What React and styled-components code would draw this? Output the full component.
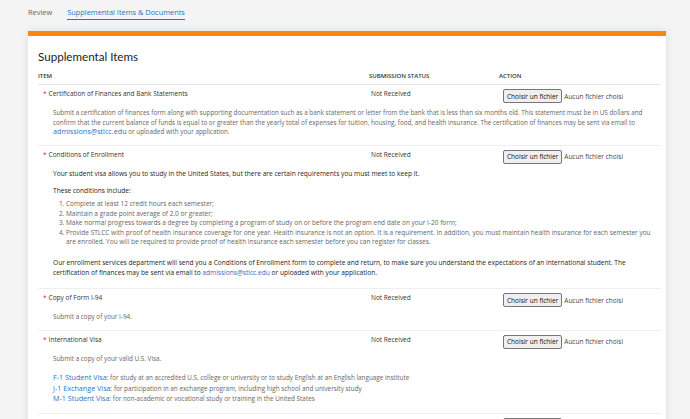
import React from "react";
import styled, { createGlobalStyle } from "styled-components";

const Global = createGlobalStyle`
  html, body { margin: 0; padding: 0; background: #f4f4f4; }
  body { font-family: "Open Sans", "Liberation Sans", sans-serif; color: #333; }
`;

const Page = styled.div`
  padding: 7px 24px 0 28px;
`;

const Tabs = styled.nav`
  display: flex;
  gap: 15px;
  align-items: flex-end;
  height: 13px;
  margin-bottom: 11px;
`;

const Tab = styled.a`
  font-size: 7.4px;
  line-height: 11px;
  color: ${(p) => (p.$active ? "#2d72c4" : "#666")};
  text-decoration: none;
  border-bottom: 1px solid ${(p) => (p.$active ? "#2d72c4" : "transparent")};
  padding-bottom: 1px;
  cursor: pointer;
`;

const Card = styled.section`
  background: #fff;
  border-top: 5px solid #f5890f;
  box-shadow: 0 0 8px rgba(0, 0, 0, 0.1);
  padding: 0 5px 0 10px;
`;

const Title = styled.h2`
  margin: 0;
  padding-top: 13px;
  font-family: "Lato", "Open Sans", sans-serif;
  font-weight: 400;
  font-size: 11.6px;
  line-height: 16px;
  color: #222;
`;

const Grid = styled.div`
  display: grid;
  grid-template-columns: 327px 130px 1fr;
  align-items: start;
`;

const Header = styled(Grid)`
  margin-top: 6.5px;
  border-bottom: 1px solid #e6e6e6;
  padding-bottom: 3.5px;
`;

const HeadCell = styled.div`
  font-size: 6px;
  font-weight: 600;
  text-transform: uppercase;
  color: #333;
  line-height: 9px;
  padding-left: ${(p) => p.$pad || 0}px;
`;

const Row = styled.div`
  border-top: ${(p) => (p.$first ? "none" : "1px solid #efefef")};
  padding: 4px 0 ${(p) => p.$pb || 8}px;
`;

const ItemName = styled.div`
  font-size: 6.5px;
  line-height: 9.6px;
  color: #333;
  padding-left: 5px;
  &::before {
    content: "*";
    color: #d9312b;
    margin-right: 2px;
  }
`;

const Status = styled.div`
  font-size: 6.5px;
  line-height: 9.6px;
  color: #333;
  padding-left: 6px;
`;

const Action = styled.div`
  display: flex;
  align-items: center;
  gap: 2px;
  padding-left: 8px;
  font-size: 6.5px;
  color: #444;
`;

const FileButton = styled.button`
  font-family: "Open Sans", "Liberation Sans", sans-serif;
  font-size: 6.5px;
  height: 14px;
  padding: 0 3px;
  background: #efefef;
  border: 1px solid #767676;
  border-radius: 2px;
  color: #111;
  cursor: pointer;
`;

const Desc = styled.div`
  margin-top: 5px;
  padding: 0 0 0 15px;
  font-size: 6.35px;
  line-height: 9.6px;
  color: #666;
`;

const P = styled.p`
  margin: ${(p) => p.$m || "0"};
  color: ${(p) => (p.$dark ? "#1e1e1e" : "#666")};
  font-size: ${(p) => (p.$dark ? "6.6px" : "inherit")};
  font-weight: ${(p) => (p.$dark ? 500 : 400)};
  padding-right: ${(p) => (p.$dark ? "5px" : "0")};
`;

const List = styled.ol`
  margin: 3.5px 0 0;
  padding: 0 9px 0 13px;
  font-size: 6.5px;
  color: #666;
`;

const Link = styled.a`
  color: #2d72c4;
  text-decoration: none;
  line-height: 1;
  font-size: ${(p) => (p.$big ? "7.2px" : "inherit")};
`;

const VisaLine = styled.div`
  line-height: 10.4px;
`;

function FileInput() {
  return (
    <Action>
      <FileButton type="button">Choisir un fichier</FileButton>
      <span>Aucun fichier choisi</span>
    </Action>
  );
}

function ItemHead({ name }) {
  return (
    <Grid>
      <ItemName>{name}</ItemName>
      <Status>Not Received</Status>
      <FileInput />
    </Grid>
  );
}

export default function App() {
  return (
    <>
      <Global />
      <Page>
        <Tabs>
          <Tab>Review</Tab>
          <Tab $active>Supplemental Items &amp; Documents</Tab>
        </Tabs>
        <Card>
          <Title>Supplemental Items</Title>
          <Header>
            <HeadCell>Item</HeadCell>
            <HeadCell $pad={4}>Submission Status</HeadCell>
            <HeadCell $pad={4}>Action</HeadCell>
          </Header>

          <Row $first>
            <ItemHead name="Certification of Finances and Bank Statements" />
            <Desc>
              Submit a certification of finances form along with supporting documentation such as a bank
              statement or letter from the bank that is less than six months old. This statement must be in
              US dollars and confirm that the current balance of funds is equal to or greater than the yearly
              total of expenses for tuition, housing, food, and health insurance. The certification of
              finances may be sent via email to <Link $big>admissions@stlcc.edu</Link> or uploaded with your
              application.
            </Desc>
          </Row>

          <Row $pb={11}>
            <ItemHead name="Conditions of Enrollment" />
            <Desc>
              <P $dark>
                Your student visa allows you to study in the United States, but there are certain requirements
                you must meet to keep it.
              </P>
              <P $dark $m="7.5px 0 0">These conditions include:</P>
              <List>
                <li>Complete at least 12 credit hours each semester;</li>
                <li>Maintain a grade point average of 2.0 or greater;</li>
                <li>
                  Make normal progress towards a degree by completing a program of study on or before the
                  program end date on your I-20 form;
                </li>
                <li>
                  Provide STLCC with proof of health insurance coverage for one year. Health insurance is not an
                  option. It is a requirement. In addition, you must maintain health insurance for each semester
                  you are enrolled. You will be required to provide proof of health insurance each semester
                  before you can register for classes.
                </li>
              </List>
              <P $dark $m="11px 0 0">
                Our enrollment services department will send you a Conditions of Enrollment form to complete and
                return, to make sure you understand the expectations of an international student. The
                certification of finances may be sent via email to <Link>admissions@stlcc.edu</Link> or
                uploaded with your application.
              </P>
            </Desc>
          </Row>

          <Row>
            <ItemHead name="Copy of Form I-94" />
            <Desc>Submit a copy of your I-94.</Desc>
          </Row>

          <Row>
            <ItemHead name="International Visa" />
            <Desc>
              Submit a copy of your valid U.S. Visa.
              <P $m="10px 0 0" as="div">
                <VisaLine>
                  <Link $big>F-1 Student Visa</Link>: for study at an accredited U.S. college or university or
                  to study English at an English language institute
                </VisaLine>
                <VisaLine>
                  <Link $big>J-1 Exchange Visa</Link>: for participation in an exchange program, including high
                  school and university study
                </VisaLine>
                <VisaLine>
                  <Link $big>M-1 Student Visa</Link>: for non-academic or vocational study or training in the
                  United States
                </VisaLine>
              </P>
            </Desc>
          </Row>

          <Row>
            <ItemHead name="Transcripts" />
          </Row>
        </Card>
      </Page>
    </>
  );
}
